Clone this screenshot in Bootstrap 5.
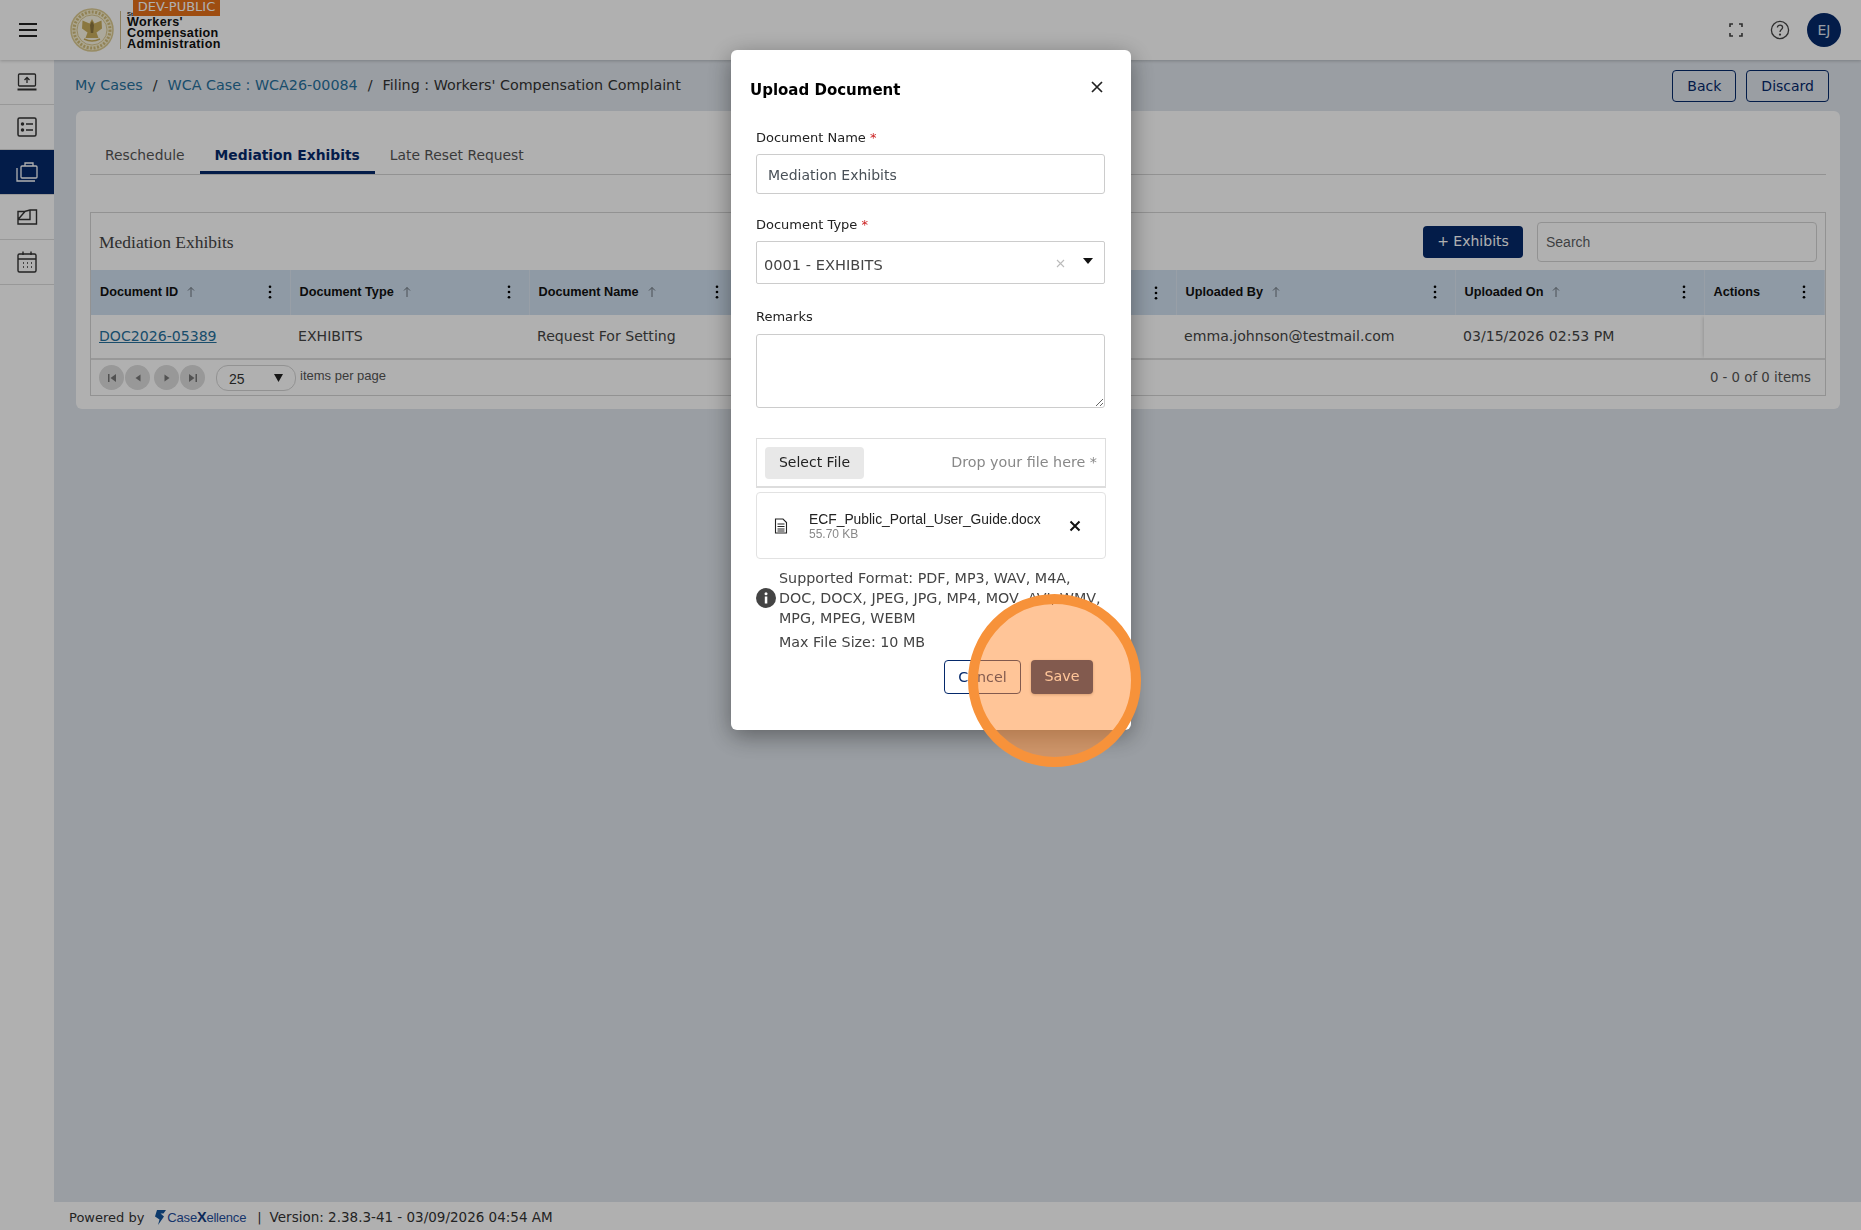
<!DOCTYPE html>
<html lang="en">
<head>
  <meta charset="UTF-8" />
  <meta name="viewport" content="width=device-width, initial-scale=1.0" />
  <title>Upload Document | Workers' Compensation Administration</title>
  <link href="https://cdn.jsdelivr.net/npm/bootstrap@5.3.3/dist/css/bootstrap.min.css" rel="stylesheet">
  <style>
    body { font-family: "DejaVu Sans", sans-serif; font-size: 13.5px; color: #333; background: #dfe5ec; height: 1230px; overflow: hidden; }
    .top-bar { height: 60px; background: #fff; flex-shrink: 0; padding: 0 20px 0 19px; box-shadow: 0 1px 3px rgba(0,0,0,.2); position: relative; z-index: 2; }
    .menu-btn { width: 18px; height: 14px; border-top: 2px solid #222; border-bottom: 2px solid #222; position: relative; margin-right: 24px; }
    .menu-btn::after { content: ""; position: absolute; left: 0; right: 0; top: 4px; height: 2px; background: #222; }
    .logo { position: relative; height: 60px; margin-left: 9px; }
    .logo-text { border-left: 1px solid #cbb98a; margin-left: 6px; padding-left: 6px; height: 38px; margin-top: 11px; font-family: "Liberation Sans", sans-serif; font-weight: 700; font-size: 12.6px; letter-spacing: .35px; line-height: 11px; color: #111; }
    .logo-small { font-size: 6px; line-height: 6px; letter-spacing: 0; }
    .env-badge { position: absolute; left: 63px; top: 0; width: 87px; height: 16px; background: #e5701a; color: #fff; font-size: 13px; line-height: 14px; text-align: center; }
    .avatar { width: 34px; height: 34px; border-radius: 50%; background: #05296b; color: #dde3ee; font-size: 14px; margin-left: 17px; }
    .side-nav { width: 54px; background: #fff; flex-shrink: 0; }
    .side-nav a { display: flex; height: 45px; align-items: center; justify-content: center; border-bottom: 1px solid #dcdcdc; color: #333; }
    .side-nav a.active { background: #05296b; color: #fff; }
    .crumb-row { height: 51px; padding: 0 32px 0 21px; flex-shrink: 0; }
    .breadcrumb { --bs-breadcrumb-margin-bottom: 0; --bs-breadcrumb-item-padding-x: 10px; --bs-breadcrumb-divider-color: #333; font-size: 14.3px; }
    .breadcrumb a { color: #26709c; text-decoration: none; }
    .breadcrumb-item.active { color: #333; }
    .btn-line { border: 1px solid #05296b; color: #05296b; background: #fff; border-radius: 4px; font-size: 14px; height: 32px; padding: 0 14px; line-height: 30px; }
    .crumb-row .btn-line { background: transparent; }
    .crumb-actions { gap: 10px; }
    .btn-navy { background: #05296b; color: #fff; border: 0; border-radius: 4px; font-size: 14px; height: 32px; width: 100px; padding: 0; }
    .main-card { margin: 0 21px 0 22px; background: #fff; border: 0; border-radius: 6px; padding: 25px 14px 13px; }
    .nav-tabs { --bs-nav-tabs-border-color: #d4d4d4; --bs-nav-tabs-border-width: 1px; height: 39px; margin-bottom: 37px; }
    .nav-tabs .nav-link { border: 0; padding: 0 15px; height: 38px; line-height: 38px; color: #555; font-size: 13.85px; }
    .nav-tabs .nav-link.active { color: #05296b; font-weight: 700; background: transparent; border-bottom: 3px solid #05296b; }
    .grid-box { border: 1px solid #d4d4d4; }
    .grid-title { height: 57px; padding: 0 8px 0 8px; }
    .grid-title h2 { font-family: "Liberation Serif", serif; font-size: 17.5px; font-weight: 400; color: #444; margin: 2px 0 0; }
    .grid-search { width: 280px; height: 40px; font-family: "Liberation Sans", sans-serif; font-size: 14px; margin-left: 14px; border-radius: 4px; padding: 0 8px; border-color: #d4d4d4; }
    .grid-table { table-layout: fixed; width: 100%; margin: 0; --bs-table-bg: transparent; }
    .grid-table th { background: #cfdfef; height: 45px; font-family: "Liberation Sans", sans-serif; font-size: 12.7px; font-weight: 700; color: #111; padding: 0 9px; vertical-align: middle; border-bottom: 0; border-right: 1px solid #dce7f2; }
    .grid-table td { height: 44px; padding: 0 8px; vertical-align: middle; font-size: 14.1px; color: #444; border-bottom: 2px solid #dcdcdc; }
    .grid-table td a { color: #26709c; }
    .grid-table td.col-actions { box-shadow: -3px 0 3px -2px rgba(0,0,0,.15); }
    .grid-table .kebab { margin-right: 9px; }
    .grid-pager { height: 35px; padding: 0 14px 0 8px; color: #555; }
    .pager-btn { width: 25px; height: 25px; border-radius: 50%; background: #dcdcdc; margin-right: 1px; }
    .pager-btn.gap { margin-left: 3px; }
    .page-size { width: 80px; height: 26px; margin: 0 4px 0 10px; padding: 3px 12px; border: 1px solid #d4d4d4; border-radius: 12px; font-family: "Liberation Sans", sans-serif; font-size: 14px; color: #333; }
    .pager-label { font-family: "Liberation Sans", sans-serif; font-size: 13px; margin-top: -3px; }
    .pager-count { font-size: 13.3px; }
    .page-foot { height: 28px; margin-top: auto; background: #fff; padding: 3px 0 0 15px; font-size: 13px; color: #333; }
    .foot-logo { margin-left: 10px; }
    .foot-version { font-size: 13.5px; }
    .brand { font-family: "Liberation Sans", sans-serif; font-size: 13px; color: #1f4e9c; letter-spacing: -.2px; margin: 0 11px 0 1px; }
    .brand b { color: #123a80; font-size: 14.5px; font-weight: 700; }
    .modal-backdrop.show { opacity: .31; }
    .modal-dialog { width: 400px; max-width: 400px; margin: 50px 0 0 731px; }
    .modal-content { height: 680px; border: 0; border-radius: 6px; box-shadow: 0 6px 24px rgba(0,0,0,.4); }
    .dlg-head { height: 78px; padding: 0 28px 4px 19px; }
    .dlg-head h5 { font-size: 15px; font-weight: 700; color: #000; margin: 0 0 -6px; }
    .dlg-body { padding: 0 25px; }
    .form-label { font-size: 13px; line-height: 19px; color: #222; margin-bottom: 7px; display: block; }
    .form-label span { color: #c22; }
    .dlg-input { width: 349px; height: 40px; font-size: 14px; color: #495057; padding: 2px 11px 0; border-color: #ccc; border-radius: 3px; margin-bottom: 21px; }
    .dlg-select { width: 349px; height: 43px; font-size: 14.6px; color: #444; padding: 4px 11px 0 7px; border: 1px solid #ccc; border-radius: 2px; margin-bottom: 23px; }
    .dlg-select .clear-x { margin-top: -2px; }
    .dlg-select .caret { width: 0; height: 0; border: 5px solid transparent; border-top: 6px solid #111; border-bottom: 0; margin: -8px 0 0 18px; }
    .dlg-area { width: 349px; height: 74px; border-color: #ccc; border-radius: 3px; margin-top: 8px; margin-bottom: 30px; }
    .drop-box { height: 50px; padding: 0 8px; border: 1px solid #ddd; border-bottom-width: 2px; }
    .select-btn { height: 32px; width: 99px; padding: 0; background: #e8e8e8; border: 0; border-radius: 4px; font-size: 14px; color: #222; }
    .drop-hint { font-size: 14.3px; color: #888; }
    .file-row { height: 67px; margin-top: 4px; padding: 0 24px 0 17px; border: 1px solid #e2e2e2; border-radius: 4px; font-family: "Liberation Sans", sans-serif; }
    .file-text { margin-left: 21px; }
    .file-name { font-size: 13.85px; color: #222; line-height: 16px; }
    .file-size { font-size: 12px; color: #888; line-height: 14px; }
    .format-note { margin-top: 9px; font-size: 14.3px; line-height: 20px; color: #444; }
    .format-note p { margin: 0; }
    .format-note svg { margin-right: 3px; }
    .max-size { margin-top: 4px !important; padding-left: 23px; }
    .dlg-actions { margin-top: 8px; padding-right: 13px; gap: 10px; }
    .dlg-actions .btn-line, .dlg-actions .btn-navy { height: 34px; font-size: 14.3px; }
    .dlg-actions .btn-line { width: 77px; padding: 0; }
    .dlg-actions .btn-navy { width: 62px; box-shadow: 0 1px 3px rgba(0,0,0,.3); }
    .step-marker { position: fixed; left: 968px; top: 594px; width: 173px; height: 173px; border-radius: 50%; border: 10px solid #f7923a; background: rgba(255,140,50,.5); z-index: 1060; }
  </style>
</head>
<body>
  <svg width="0" height="0" class="position-absolute">
    <symbol id="kebab" viewBox="0 0 4 16"><circle cx="2" cy="2" r="1.5"/><circle cx="2" cy="8" r="1.5"/><circle cx="2" cy="14" r="1.5"/></symbol>
    <symbol id="sort-up" viewBox="0 0 10 12"><path d="M5 11V1.5M2 4.5l3-3 3 3" fill="none" stroke="currentColor" stroke-width="1"/></symbol>
  </svg>

  <!-- Шапка -->
  <header class="top-bar d-flex align-items-center">
    <div class="menu-btn"></div>
    <div class="logo d-flex align-items-center">
      <svg width="44" height="44" viewBox="0 0 44 44">
        <circle cx="22" cy="22" r="21" fill="#f7efce" stroke="#dccb92" stroke-width="1.5"/>
        <circle cx="22" cy="22" r="18" fill="none" stroke="#d2bd7c" stroke-width="3" stroke-dasharray="2 1.5"/>
        <circle cx="22" cy="22" r="15" fill="#faf5e3" stroke="#d2bd7c" stroke-width=".8"/>
        <path d="M22 11l2.500 4.500 7-3 .5 8-5.500 4 2 5.500H15.500l2-5.500-5.500-4 .5-8 7 3z" fill="#c9ad5c"/>
        <path d="M20 17l2-4 2 4-.8 8h-2.400z" fill="#8d7740"/>
        <path d="M14 31q8 4 16 0" fill="none" stroke="#c9ad5c" stroke-width="1.500"/>
      </svg>
      <div class="logo-text align-self-start"><div class="logo-small">St</div>Workers'<br>Compensation<br>Administration</div>
      <div class="env-badge">DEV-PUBLIC</div>
    </div>
    <div class="ms-auto d-flex align-items-center">
      <svg width="14" height="14" viewBox="0 0 14 14" fill="none" stroke="#444" stroke-width="1.6"><path d="M1 4V1h3M10 1h3v3M13 10v3h-3M4 13H1v-3"/></svg>
      <svg width="20" height="20" viewBox="0 0 20 20" fill="none" stroke="#444" stroke-width="1.3" style="margin-left: 27px"><circle cx="10" cy="10" r="8.6"/><path d="M7.4 7.6c0-3.2 5.2-3.2 5.2 0 0 2-2.6 2-2.6 4.4"/><circle cx="10" cy="14.6" r=".5"/></svg>
      <div class="avatar d-flex align-items-center justify-content-center">EJ</div>
    </div>
  </header>

  <div class="d-flex" style="height: 1170px">
    <!-- Бічне меню -->
    <nav class="side-nav">
      <a href="#"><svg width="24" height="24" viewBox="0 0 24 24" fill="none" stroke="currentColor" stroke-width="1.3"><rect x="3.5" y="4" width="17" height="12" rx="1"/><path d="M2.500 19.500h19" stroke-width="2"/><path d="M12 13V7.500M9.500 10L12 7.500 14.500 10"/></svg></a>
      <a href="#"><svg width="24" height="24" viewBox="0 0 24 24" fill="none" stroke="currentColor" stroke-width="1.5"><rect x="3" y="3" width="18" height="18" rx="1.500"/><path d="M11 9h7M11 15h7"/><circle cx="7.500" cy="9" r="1" fill="currentColor"/><circle cx="7.500" cy="15" r="1" fill="currentColor"/></svg></a>
      <a href="#" class="active"><svg width="24" height="24" viewBox="0 0 24 24" fill="none" stroke="currentColor" stroke-width="1.3"><rect x="6" y="6" width="16" height="12" rx="1"/><path d="M10 6V3h8v3M2 8v13h18"/></svg></a>
      <a href="#"><svg width="24" height="24" viewBox="0 0 24 24" fill="none" stroke="currentColor" stroke-width="1.4"><path d="M3 6.500h6.500L15 5h6.500v14H3zM3 14.500L10 6.500M3 14.500h12V5"/></svg></a>
      <a href="#"><svg width="24" height="24" viewBox="0 0 24 24" fill="none" stroke="currentColor" stroke-width="1.4"><rect x="3" y="4" width="18" height="18" rx="1.500"/><path d="M3 9h18M8 1.500V5M16 1.500V5"/><path d="M8 13h1M12 13h1M16 13h1M8 17h1M12 17h1M16 17h1" stroke-width="1.600"/></svg></a>
    </nav>

    <!-- Основний вміст -->
    <main class="flex-grow-1 d-flex flex-column">
      <div class="crumb-row d-flex align-items-center">
        <ol class="breadcrumb">
          <li class="breadcrumb-item"><a href="#">My Cases</a></li>
          <li class="breadcrumb-item"><a href="#">WCA Case : WCA26-00084</a></li>
          <li class="breadcrumb-item active">Filing : Workers' Compensation Complaint</li>
        </ol>
        <div class="ms-auto d-flex crumb-actions">
          <button class="btn-line">Back</button>
          <button class="btn-line">Discard</button>
        </div>
      </div>

      <section class="card main-card">
        <ul class="nav nav-tabs">
          <li class="nav-item"><a class="nav-link" href="#">Reschedule</a></li>
          <li class="nav-item"><a class="nav-link active" href="#">Mediation Exhibits</a></li>
          <li class="nav-item"><a class="nav-link" href="#">Late Reset Request</a></li>
        </ul>

        <div class="grid-box">
          <div class="grid-title d-flex align-items-center">
            <h2>Mediation Exhibits</h2>
            <button class="btn-navy ms-auto">+ Exhibits</button>
            <input type="text" class="form-control grid-search" placeholder="Search">
          </div>
          <table class="table grid-table">
            <colgroup>
              <col style="width: 199px"><col style="width: 239px"><col style="width: 208px"><col style="width: 439px"><col style="width: 279px"><col style="width: 249px"><col>
            </colgroup>
            <thead>
              <tr>
                <th><div class="d-flex align-items-center">Document ID<svg class="ms-2 text-secondary" width="10" height="12"><use href="#sort-up"/></svg><svg class="ms-auto kebab" width="4" height="14"><use href="#kebab"/></svg></div></th>
                <th><div class="d-flex align-items-center">Document Type<svg class="ms-2 text-secondary" width="10" height="12"><use href="#sort-up"/></svg><svg class="ms-auto kebab" width="4" height="14"><use href="#kebab"/></svg></div></th>
                <th><div class="d-flex align-items-center">Document Name<svg class="ms-2 text-secondary" width="10" height="12"><use href="#sort-up"/></svg><svg class="ms-auto kebab" width="4" height="14"><use href="#kebab"/></svg></div></th>
                <th><div class="d-flex align-items-center"><svg class="ms-auto kebab" width="4" height="14"><use href="#kebab"/></svg></div></th>
                <th><div class="d-flex align-items-center">Uploaded By<svg class="ms-2 text-secondary" width="10" height="12"><use href="#sort-up"/></svg><svg class="ms-auto kebab" width="4" height="14"><use href="#kebab"/></svg></div></th>
                <th><div class="d-flex align-items-center">Uploaded On<svg class="ms-2 text-secondary" width="10" height="12"><use href="#sort-up"/></svg><svg class="ms-auto kebab" width="4" height="14"><use href="#kebab"/></svg></div></th>
                <th><div class="d-flex align-items-center">Actions<svg class="ms-auto kebab" width="4" height="14"><use href="#kebab"/></svg></div></th>
              </tr>
            </thead>
            <tbody>
              <tr>
                <td><a href="#">DOC2026-05389</a></td>
                <td>EXHIBITS</td>
                <td>Request For Setting</td>
                <td></td>
                <td>emma.johnson@testmail.com</td>
                <td>03/15/2026 02:53 PM</td>
                <td class="col-actions"></td>
              </tr>
            </tbody>
          </table>
          <div class="grid-pager d-flex align-items-center">
            <span class="pager-btn d-flex align-items-center justify-content-center"><svg width="10" height="10" viewBox="0 0 10 10" fill="#777"><path d="M1 1h1.500v8H1zM9 1v8L3.500 5z"/></svg></span>
            <span class="pager-btn d-flex align-items-center justify-content-center"><svg width="10" height="10" viewBox="0 0 10 10" fill="#777"><path d="M7.500 1.500v7L2.500 5z"/></svg></span>
            <span class="pager-btn gap d-flex align-items-center justify-content-center"><svg width="10" height="10" viewBox="0 0 10 10" fill="#777"><path d="M2.500 1.500v7l5-3.500z"/></svg></span>
            <span class="pager-btn d-flex align-items-center justify-content-center"><svg width="10" height="10" viewBox="0 0 10 10" fill="#777"><path d="M9 1H7.500v8H9zM1 1v8l5.500-4z"/></svg></span>
            <div class="page-size d-flex justify-content-between align-items-center"><span class="pt-1">25</span><svg width="9" height="8" viewBox="0 0 9 8" fill="#222"><path d="M0 0h9L4.500 8z"/></svg></div>
            <span class="pager-label">items per page</span>
            <span class="pager-count ms-auto">0 - 0 of 0 items</span>
          </div>
        </div>
      </section>

      <footer class="page-foot d-flex align-items-center">
        Powered by
        <span class="d-flex align-items-center foot-logo">
          <svg width="12" height="15" viewBox="0 0 12 15" fill="#14549c"><path d="M3 0h9L9.500 3.500H6.500L10 6.500 4 15l1.500-5.500L1 6.500z"/></svg>
          <span class="brand">Case<b>X</b>ellence</span>
        </span>
        |
        <span class="ms-2 foot-version">Version: 2.38.3-41 - 03/09/2026 04:54 AM</span>
      </footer>
    </main>
  </div>

  <!-- Модальне вікно -->
  <div class="modal-backdrop show"></div>
  <div class="modal d-block">
    <div class="modal-dialog">
      <div class="modal-content">
        <div class="dlg-head d-flex align-items-center justify-content-between">
          <h5>Upload Document</h5>
          <svg width="12" height="12" viewBox="0 0 12 12" stroke="#222" stroke-width="1.700"><path d="M1 1l10 10M11 1L1 11"/></svg>
        </div>
        <div class="dlg-body">
          <label class="form-label">Document Name <span>*</span></label>
          <input type="text" class="form-control dlg-input" value="Mediation Exhibits">

          <label class="form-label">Document Type <span>*</span></label>
          <div class="dlg-select d-flex align-items-center">
            <span>0001 - EXHIBITS</span>
            <svg class="ms-auto clear-x" width="9" height="9" viewBox="0 0 9 9" stroke="#bbb" stroke-width="1.100"><path d="M1 1l7 7M8 1L1 8"/></svg>
            <span class="caret"></span>
          </div>

          <label class="form-label mb-0">Remarks</label>
          <textarea class="form-control dlg-area"></textarea>

          <div class="drop-box d-flex align-items-center justify-content-between">
            <button class="select-btn">Select File</button>
            <span class="drop-hint">Drop your file here *</span>
          </div>
          <div class="file-row d-flex align-items-center">
            <svg width="14" height="16" viewBox="0 0 14 16" fill="none" stroke="#222" stroke-width="1.100"><path d="M1.500 1h7.500l3.500 3.500V15h-11z"/><path d="M3.500 6h7M3.500 8.500h7M3.500 11h7M3.500 13h7"/></svg>
            <div class="file-text">
              <div class="file-name">ECF_Public_Portal_User_Guide.docx</div>
              <div class="file-size">55.70 KB</div>
            </div>
            <svg class="ms-auto" width="12" height="12" viewBox="0 0 12 12" stroke="#111" stroke-width="2"><path d="M1.500 1.500l9 9M10.500 1.500l-9 9"/></svg>
          </div>
          <div class="format-note">
            <div class="d-flex align-items-center">
              <svg class="flex-shrink-0" width="20" height="20" viewBox="0 0 20 20"><circle cx="10" cy="10" r="10" fill="#444"/><rect x="8.800" y="8.500" width="2.500" height="7" fill="#fff"/><circle cx="10" cy="5.700" r="1.500" fill="#fff"/></svg>
              <p>Supported Format: PDF, MP3, WAV, M4A, DOC, DOCX, JPEG, JPG, MP4, MOV, AVI, WMV, MPG, MPEG, WEBM</p>
            </div>
            <p class="max-size">Max File Size: 10 MB</p>
          </div>
          <div class="dlg-actions d-flex justify-content-end">
            <button class="btn-line">Cancel</button>
            <button class="btn-navy">Save</button>
          </div>
        </div>
      </div>
    </div>
  </div>

  <!-- Маркер кроку -->
  <div class="step-marker"></div>

  <script src="https://cdn.jsdelivr.net/npm/bootstrap@5.3.3/dist/js/bootstrap.bundle.min.js"></script>
</body>
</html>
